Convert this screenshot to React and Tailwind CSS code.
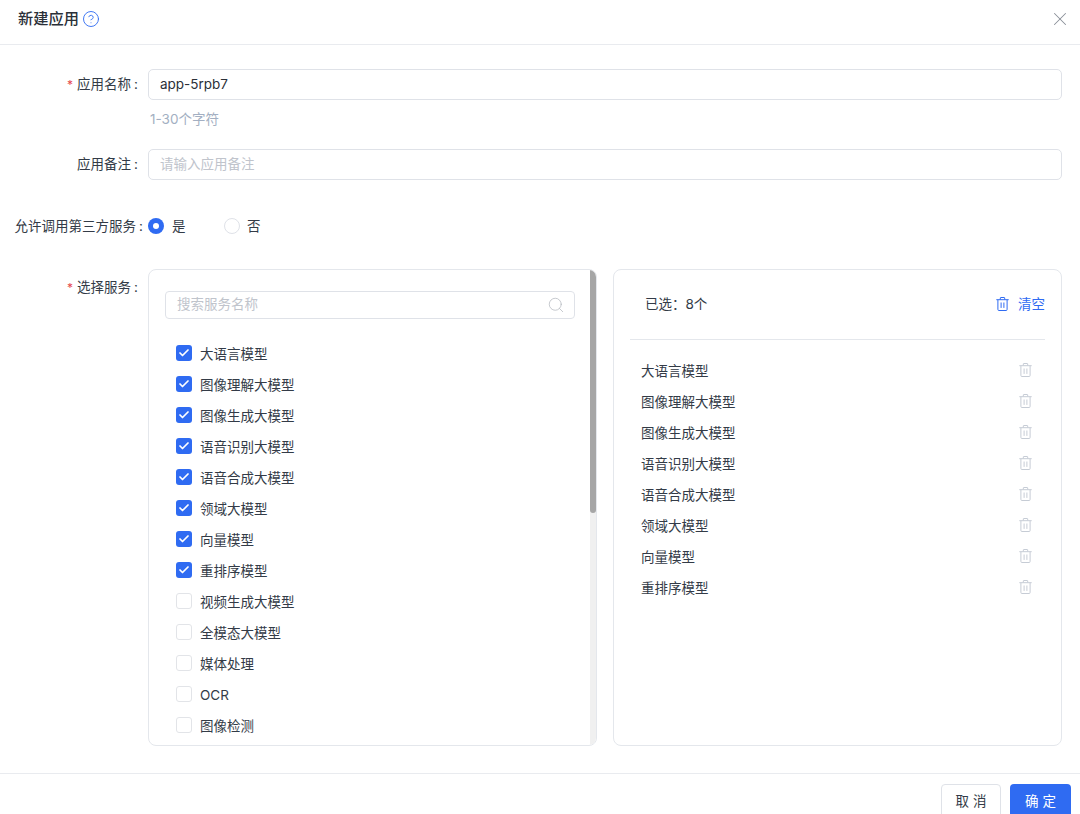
import { X, Search, Check, CircleHelp } from 'lucide-react';

const services = [
  '大语言模型', '图像理解大模型', '图像生成大模型', '语音识别大模型', '语音合成大模型',
  '领域大模型', '向量模型', '重排序模型', '视频生成大模型', '全模态大模型',
  '媒体处理', 'OCR', '图像检测',
];
const selected = services.slice(0, 8);

function Label({ required, wide, children }) {
  return (
    <div className={`w-[148px] shrink-0 flex justify-end items-center ${wide ? 'pr-[5px]' : 'pr-[10px]'} text-[13.5px] text-[#333b47] whitespace-nowrap`}>
      {required && <span className="text-[#e5484d] mr-[4px] text-[12px]">*</span>}
      {children}
      <span className="ml-[3px]">:</span>
    </div>
  );
}

function TrashIcon({ className }) {
  return (
    <svg viewBox="0.5 0.5 13 14" fill="none" stroke="currentColor" strokeWidth="1" className={className}>
      <path d="M0.8 3.2h12.4M4.8 3V1.4a.4.4 0 0 1 .4-.4h3.6a.4.4 0 0 1 .4.4V3M2.4 3.4v9.6a1 1 0 0 0 1 1h7.2a1 1 0 0 0 1-1V3.4M5.6 6v5.4M8.4 6v5.4" />
    </svg>
  );
}

export default function App() {
  return (
    <div className="w-[1080px] h-[814px] overflow-hidden bg-white flex flex-col font-['Inter','Noto_Sans_CJK_SC',sans-serif] text-[#333b47]">
      {/* 标题 */}
      <div className="h-[45px] shrink-0 border-b border-[#e9ebef] flex items-center justify-between pl-[18px] pr-[9px] pb-[6px]">
        <div className="flex items-center gap-[3px]">
          <span className="text-[15.25px] font-medium text-[#2b3038]">新建应用</span>
          <CircleHelp size={18} strokeWidth={1.2} className="text-[#2f6bf2]" />
        </div>
        <X size={22} strokeWidth={1.1} className="text-[#8a8f98]" />
      </div>

      {/* 表单 */}
      <div className="flex-1 min-h-0 pr-[18px] pt-[24px] flex flex-col">
        <div className="flex h-[31px]">
          <Label required>应用名称</Label>
          <div className="flex-1 border border-[#dfe2e8] rounded-[5px] px-[11px] flex items-center text-[13.5px] text-[#2b3038]">app-5rpb7</div>
        </div>
        <div className="pl-[150px] h-[49px] pt-[9px] text-[13.5px] leading-[20px] text-[#a3afc2]">1-30个字符</div>

        <div className="flex h-[31px]">
          <Label>应用备注</Label>
          <div className="flex-1 border border-[#dfe2e8] rounded-[5px] px-[11px] flex items-center text-[13.5px] text-[#c0c4cc]">请输入应用备注</div>
        </div>

        <div className="flex h-[22px] mt-[35px] items-center">
          <Label wide>允许调用第三方服务</Label>
          <div className="flex items-center text-[13.5px]">
            <span className="w-[16px] h-[16px] rounded-full bg-[#2f6bf2] flex items-center justify-center mr-[8px]">
              <span className="w-[6px] h-[6px] rounded-full bg-white" />
            </span>
            <span className="w-[52px]">是</span>
            <span className="w-[16px] h-[16px] rounded-full border border-[#dfe2e8] mr-[7px]" />
            <span>否</span>
          </div>
        </div>

        <div className="flex mt-[32px] h-[477px]">
          <div className="w-[148px] shrink-0 h-[37px] flex items-center justify-end">
            <Label required>选择服务</Label>
          </div>

          {/* 左侧列表 */}
          <div className="w-[449px] shrink-0 border border-[#e4e7ec] rounded-[8px] flex overflow-hidden">
            <div className="flex-1 min-w-0 pl-[16px] pr-[15px] pt-[21px]">
              <div className="h-[28px] border border-[#dfe2e8] rounded-[4px] pl-[11px] pr-[9px] flex items-center justify-between text-[13.5px] text-[#c0c4cc]">
                <span className="mb-[1px]">搜索服务名称</span>
                <Search size={18} strokeWidth={1} className="text-[#b4b8bf]" />
              </div>
              <div className="mt-[20px] pl-[11px] flex flex-col">
                {services.map((name, i) => (
                  <div key={name} className="h-[31px] flex items-center">
                    {i < 8 ? (
                      <span className="w-[16px] h-[16px] rounded-[3px] bg-[#2f6bf2] flex items-center justify-center mr-[8px] mb-[3px]">
                        <Check size={12} strokeWidth={3.5} className="text-white" />
                      </span>
                    ) : (
                      <span className="w-[16px] h-[16px] rounded-[3px] border border-[#e2e4e8] mr-[8px] mb-[3px]" />
                    )}
                    <span className="text-[13.5px] text-[#333b47]">{name}</span>
                  </div>
                ))}
              </div>
            </div>
            {/* 滚动条 */}
            <div className="w-[6px] shrink-0 bg-[#f0f0f0]">
              <div className="h-[243px] bg-[#a6a6a6] rounded-b-[3px]" />
            </div>
          </div>

          {/* 右侧已选 */}
          <div className="ml-[16px] flex-1 min-w-0 border border-[#e4e7ec] rounded-[8px] pl-[16px] pr-[16px]">
            <div className="h-[70px] border-b border-[#e4e7ec] flex items-center justify-between pl-[15px]">
              <span className="text-[13.5px]">已选：8个</span>
              <span className="flex items-center text-[13.5px] text-[#2f6bf2]">
                <TrashIcon className="w-[13px] h-[14px] mr-[9px] mb-[2px]" />
                清空
              </span>
            </div>
            <div className="pt-[16px] pl-[11px] pr-[13px] flex flex-col">
              {selected.map((name) => (
                <div key={name} className="h-[31px] flex items-center justify-between">
                  <span className="text-[13.5px] text-[#333b47]">{name}</span>
                  <TrashIcon className="w-[13px] h-[14px] text-[#c6ccd5] mb-[3px]" />
                </div>
              ))}
            </div>
          </div>
        </div>
      </div>

      {/* 底部按钮 */}
      <div className="h-[41px] shrink-0 border-t border-[#e9ebef] flex justify-end items-start pt-[10px] pr-[9px] gap-[9px] text-[13.5px]">
        <button className="w-[60px] h-[34px] border border-[#dfe2e8] rounded-[4px] bg-white text-[#333b47]">取 消</button>
        <button className="w-[61px] h-[34px] rounded-[4px] bg-[#2f6bf2] text-white">确 定</button>
      </div>
    </div>
  );
}
